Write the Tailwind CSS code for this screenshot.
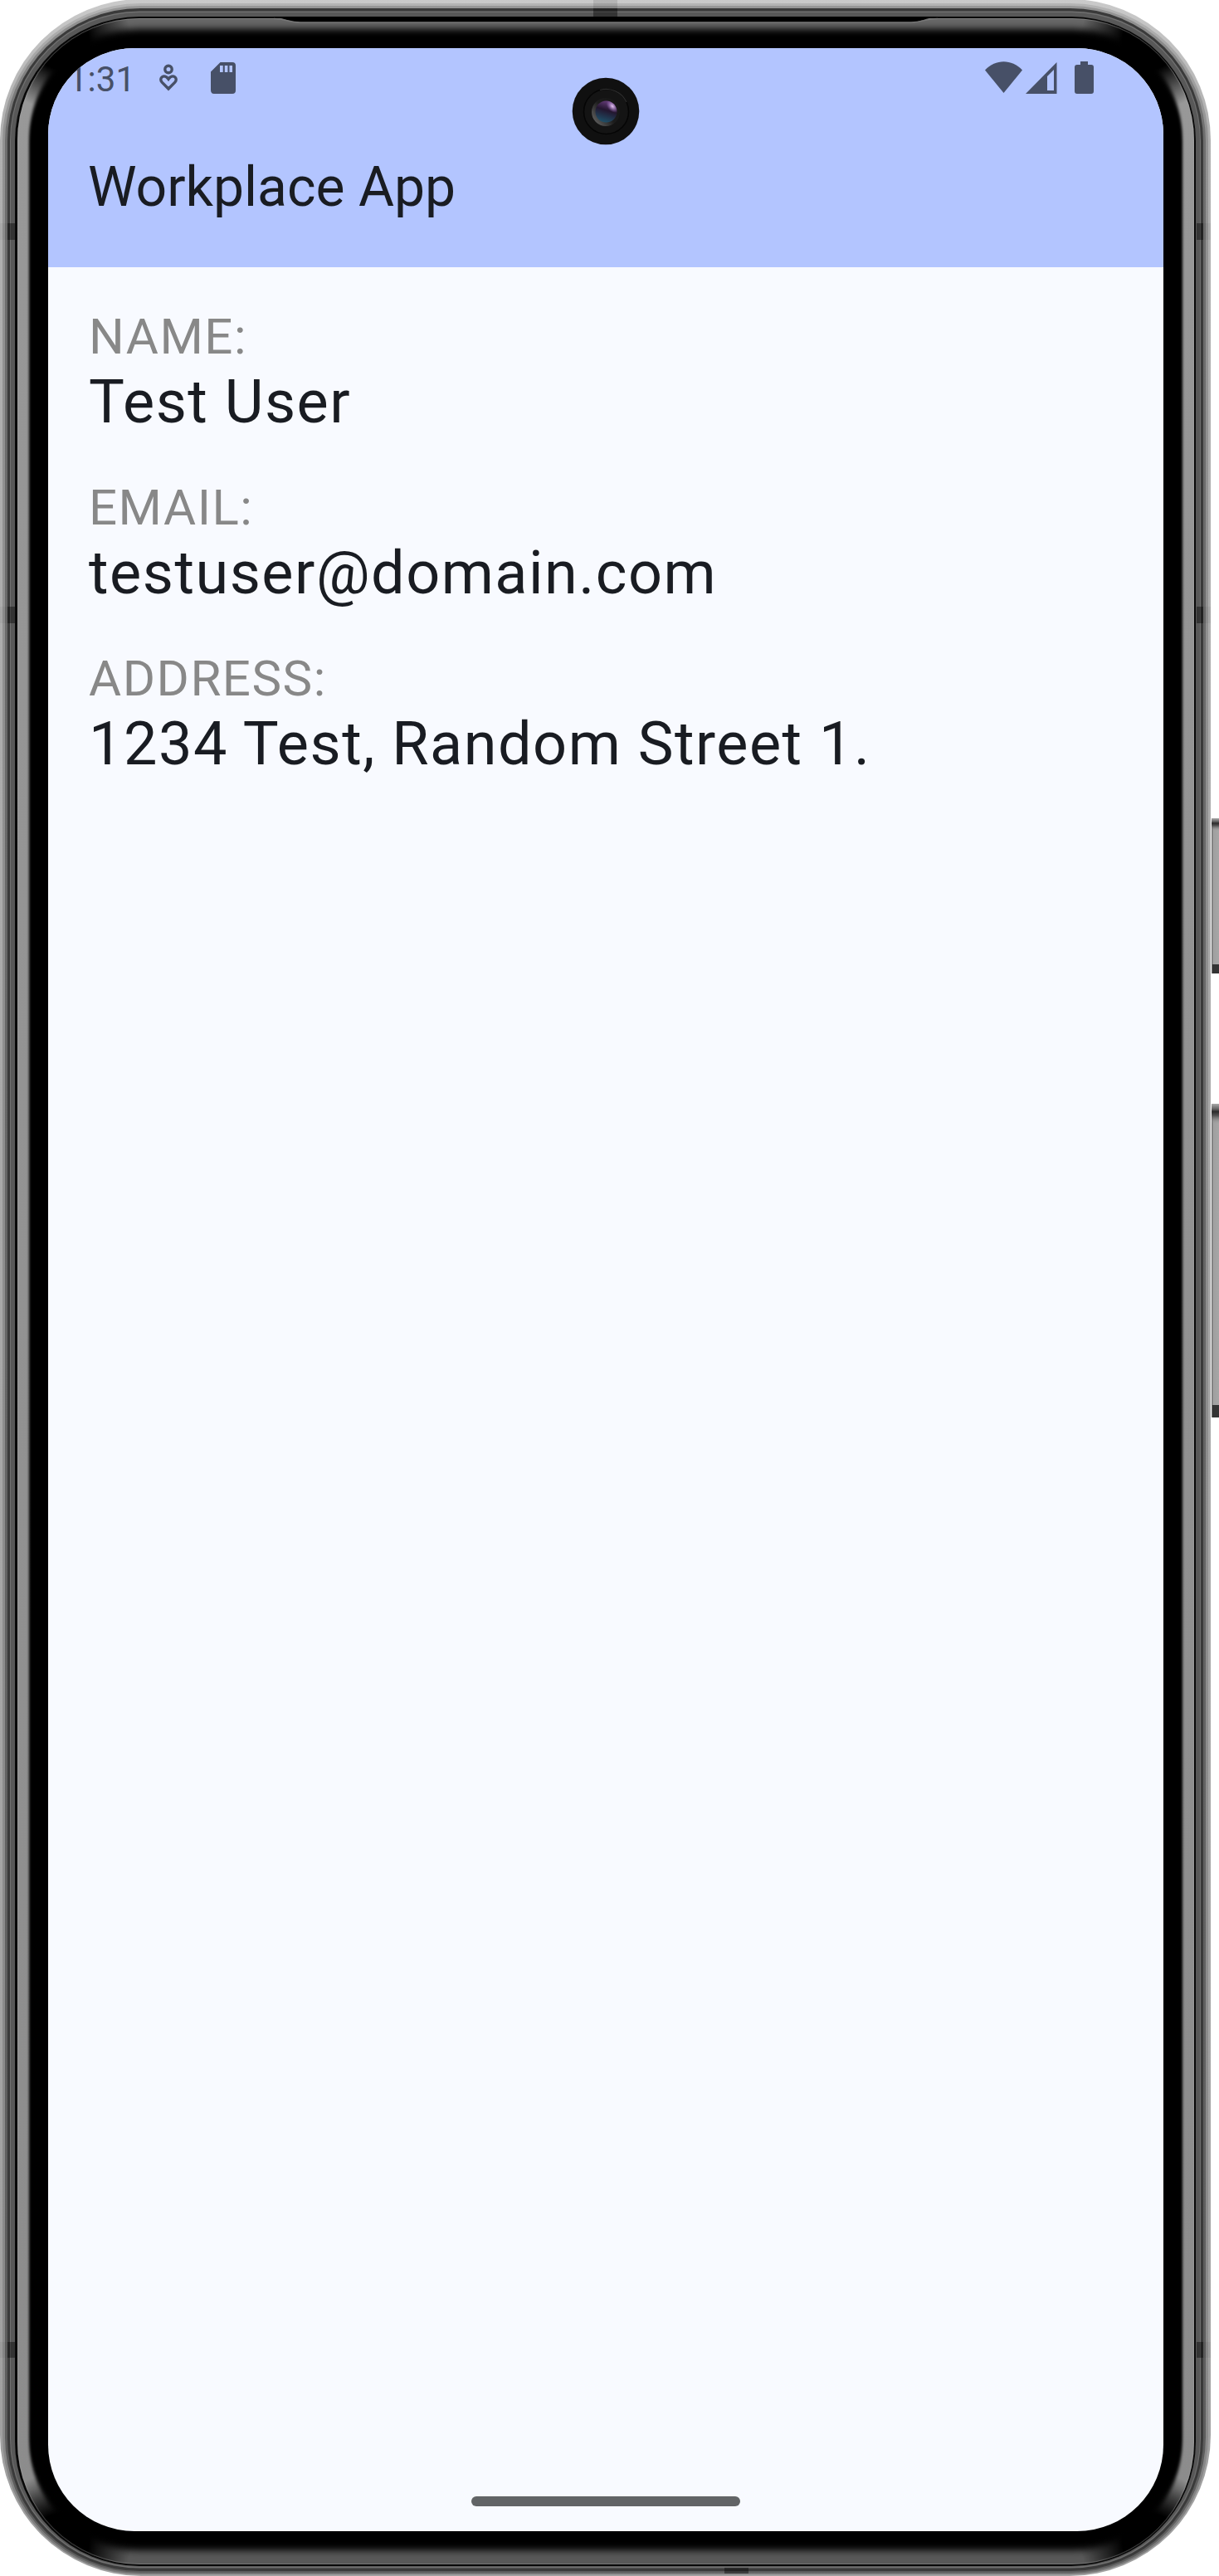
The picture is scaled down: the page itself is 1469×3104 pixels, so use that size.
<!DOCTYPE html>
<html lang="en">
<head>
<meta charset="utf-8">
<title>Workplace App</title>
<script src="https://cdn.jsdelivr.net/npm/@tailwindcss/browser@4"></script>
</head>
<body class="bg-white">
<div class="relative h-[3104px] w-[1469px] overflow-hidden p-[58px] font-['Roboto',sans-serif]">
  <!-- device body -->
  <svg class="absolute top-0 left-0" width="1469" height="3104" viewBox="0 0 1469 3104">
    <defs>
      <linearGradient id="key" x1="0" x2="1" y1="0" y2="0"><stop offset="0" stop-color="#666"/><stop offset=".25" stop-color="#a0a0a0"/><stop offset="1" stop-color="#a6a6a6"/></linearGradient>
      <linearGradient id="keytop" x1="0" x2="0" y1="0" y2="1"><stop offset="0" stop-color="#aaa"/><stop offset=".25" stop-color="#666"/><stop offset=".4" stop-color="#2c2c2c"/><stop offset=".6" stop-color="#555"/><stop offset="1" stop-color="#999" stop-opacity="0"/></linearGradient>
      <linearGradient id="r1" x1="0" x2="0" y1="0" y2="1"><stop offset="0" stop-color="#cacaca"/><stop offset=".05" stop-color="#b0b0b0"/><stop offset="1" stop-color="#a0a0a0"/></linearGradient>
      <linearGradient id="r2" x1="0" x2="0" y1="0" y2="1"><stop offset="0" stop-color="#b4b4b4"/><stop offset=".05" stop-color="#929292"/><stop offset=".95" stop-color="#8a8a8a"/><stop offset="1" stop-color="#777"/></linearGradient>
      <linearGradient id="r3" x1="0" x2="0" y1="0" y2="1"><stop offset="0" stop-color="#969696"/><stop offset=".05" stop-color="#6e6e6e"/><stop offset="1" stop-color="#5c5c5c"/></linearGradient>
      <linearGradient id="glass" gradientUnits="userSpaceOnUse" x1="0" x2="0" y1="21" y2="3091"><stop offset="0" stop-color="#666"/><stop offset=".014" stop-color="#666"/><stop offset=".022" stop-color="#989898"/><stop offset=".97" stop-color="#8c8c8c"/><stop offset=".985" stop-color="#585858"/><stop offset="1" stop-color="#585858"/></linearGradient>
      <filter id="soft" filterUnits="userSpaceOnUse" x="0" y="0" width="1469" height="3104"><feGaussianBlur stdDeviation="1.8 4.5"/></filter>
      <radialGradient id="corner"><stop offset="0" stop-color="#000"/><stop offset=".4" stop-color="#000"/><stop offset="1" stop-color="#000" stop-opacity="0"/></radialGradient>
      <clipPath id="inner"><rect x="21" y="22" width="1418" height="3068" rx="147"/></clipPath>
    </defs>
    <rect x="1460" y="986" width="9" height="187" fill="url(#key)"/>
    <rect x="1460" y="986" width="9" height="15" fill="url(#keytop)"/>
    <rect x="1461" y="1162" width="8" height="11" fill="#333"/>
    <rect x="1460" y="1330" width="9" height="378" fill="url(#key)"/>
    <rect x="1460" y="1330" width="9" height="24" fill="url(#keytop)"/>
    <rect x="1461" y="1693" width="8" height="15" fill="#333"/>
    <rect x="0" y="-1" width="1459" height="3105" rx="170" fill="url(#r1)"/>
    <rect x="3" y="4" width="1453" height="3098" rx="166" fill="url(#r2)"/>
    <rect x="6" y="7" width="1447" height="3093" rx="163" fill="url(#r3)"/>
    <rect x="9" y="10" width="1441" height="3088" rx="160" fill="#3a3a3a"/>
    <rect x="12" y="13.5" width="1435" height="3081" rx="156" fill="#707070"/>
    <rect x="13" y="15" width="1433" height="3078" rx="155" fill="#585858"/>
    <rect x="18" y="20" width="1423" height="3072" rx="150" fill="#080808"/>
    <rect x="21" y="22" width="1418" height="3068" rx="147" fill="url(#glass)"/>
    <g clip-path="url(#inner)">
      <rect x="35" y="35" width="1390" height="3038" rx="133" fill="#000" filter="url(#soft)"/>
      <circle cx="74" cy="50" r="84" fill="url(#corner)"/>
      <circle cx="1386" cy="50" r="84" fill="url(#corner)"/>
      <circle cx="74" cy="3062" r="84" fill="url(#corner)"/>
      <circle cx="1386" cy="3062" r="84" fill="url(#corner)"/>
    </g>
    <rect x="21.5" y="22.5" width="1417" height="3067" rx="146.5" fill="none" stroke="#aaa" stroke-opacity=".35"/>
    <!-- earpiece slot -->
    <path d="M328 20H1130L1120 22C1110 24 1106 27 1098 27H362C352 27 348 24 338 22Z" fill="#000"/>
    <path d="M330 22.5C344 22.5 348 27 362 27H1098C1112 27 1114 22.5 1130 22.5" fill="none" stroke="#777" stroke-width="1.4"/>
    <!-- antenna bands -->
    <g fill="#000">
      <path d="M715 0h29v10h-29z" fill-opacity=".1"/><path d="M715 10h29v10h-29z" fill-opacity=".4"/>
      <path d="M9 269h9v20H9zM9 731h9v20H9zM9 2822h9v19H9zM1442 269h8v20h-8zM1442 731h8v20h-8zM1442 2822h8v19h-8zM873 3094h29v7h-29z" fill-opacity=".4"/>
      <path d="M0 269h9v20H0zM0 731h9v20H0zM0 2822h9v19H0zM1450 269h9v20h-9zM1450 731h9v20h-9zM1450 2822h9v19h-9z" fill-opacity=".04"/>
    </g>
  </svg>

  <!-- screen -->
  <div class="relative flex h-[2992px] w-[1344px] flex-col overflow-hidden rounded-[104px] bg-[#f8faff]">
    <header class="flex h-[264px] flex-col bg-[#b3c5ff]">
      <div class="flex h-[72px] items-start justify-between pt-[16px] pr-[84px] pl-[24px] text-[#475067]">
        <div class="flex items-start">
          <div class="w-[109px] pt-[1px] text-[42px] leading-[42px]">1:31</div>
          <svg class="mt-[3px]" width="24" height="34" viewBox="0 0 24 34" fill="none" stroke="currentColor" stroke-width="3.4"><circle cx="12" cy="6.5" r="4.2"/><path d="M12 30L4.2 22.2C-.4 17 7 11.2 12 18.3C17 11.2 24.4 17 19.8 22.2Z"/></svg>
          <svg class="ml-[39px]" width="30" height="40" viewBox="0 0 30 40" fill="currentColor"><path fill-rule="evenodd" d="M11.500 1H26Q30 1 30 5V35Q30 39 26 39H4Q0 39 0 35V12.500ZM11 5V13H14.700V5ZM16.800 5V13H20.400V5ZM22.500 5V13H26V5Z"/></svg>
        </div>
        <div class="flex items-start">
          <svg width="45" height="40" viewBox="0 0 45 40" fill="currentColor"><path d="M0 10.500C13-3.200 32-3.200 45 10.500L22.500 38Z"/></svg>
          <svg class="ml-[4px]" width="38" height="40" viewBox="0 0 38 40" fill="currentColor"><path fill-rule="evenodd" d="M37.500 1V39H0ZM26 18V35H34V10Z"/></svg>
          <svg class="ml-[21px]" width="23" height="40" viewBox="0 0 23 40" fill="currentColor"><path d="M7 0H16V4H20Q23 4 23 7V36Q23 39 20 39H3Q0 39 0 36V7Q0 4 3 4H7Z"/></svg>
        </div>
      </div>
      <h1 class="pt-[54px] pl-[48px] text-[66px] leading-[84px] text-[#191c22]">Workplace App</h1>
    </header>
    <main class="flex grow flex-col gap-[55px] pt-[48px] pr-[48px] pl-[49px] tracking-[1.5px]">
      <section class="flex flex-col gap-[7px]">
        <div class="text-[60px] leading-[72px] text-[#888888]">NAME:</div>
        <div class="text-[72px] leading-[72px] text-[#191c22]">Test User</div>
      </section>
      <section class="flex flex-col gap-[7px]">
        <div class="text-[60px] leading-[72px] text-[#888888]">EMAIL:</div>
        <div class="text-[72px] leading-[72px] text-[#191c22]">testuser@domain.com</div>
      </section>
      <section class="flex flex-col gap-[7px]">
        <div class="text-[60px] leading-[72px] text-[#888888]">ADDRESS:</div>
        <div class="text-[72px] leading-[72px] text-[#191c22]">1234 Test, Random Street 1.</div>
      </section>
    </main>
    <div class="mb-[30px] h-[12px] w-[324px] self-center rounded-full bg-[#626466]"></div>
  </div>

  <!-- front camera -->
  <svg class="absolute top-[93px] left-[689px]" width="82" height="82" viewBox="0 0 82 82">
    <defs>
      <linearGradient id="lens" x1=".7" y1="0" x2=".4" y2="1"><stop offset="0" stop-color="#6b3f80"/><stop offset=".45" stop-color="#23162f"/><stop offset="1" stop-color="#1f5068"/></linearGradient>
      <linearGradient id="ring" x1="0" y1=".9" x2="1" y2=".1"><stop offset="0" stop-color="#6a6a6a"/><stop offset=".5" stop-color="#1c1c1c"/><stop offset="1" stop-color="#151515"/></linearGradient>
      <radialGradient id="glint"><stop offset="0" stop-color="#e8c8f5"/><stop offset="1" stop-color="#9a6cc0" stop-opacity="0"/></radialGradient>
      <clipPath id="lensclip"><circle cx="41.500" cy="41.500" r="13"/></clipPath>
    </defs>
    <circle cx="41" cy="41" r="40.300" fill="#101010"/>
    <circle cx="41.500" cy="41.500" r="27" fill="#141414" stroke="#050505" stroke-width="1.500"/>
    <path d="M34 15.500A27 27 0 0 1 66 30" fill="none" stroke="#2c2c2c" stroke-width="1.200"/>
    <circle cx="41" cy="42" r="17" fill="url(#ring)"/>
    <circle cx="41.500" cy="41.500" r="13" fill="url(#lens)"/>
    <g clip-path="url(#lensclip)"><ellipse cx="49" cy="35" rx="9" ry="6" transform="rotate(48 49 35)" fill="url(#glint)"/></g>
  </svg>
</div>
</body>
</html>
